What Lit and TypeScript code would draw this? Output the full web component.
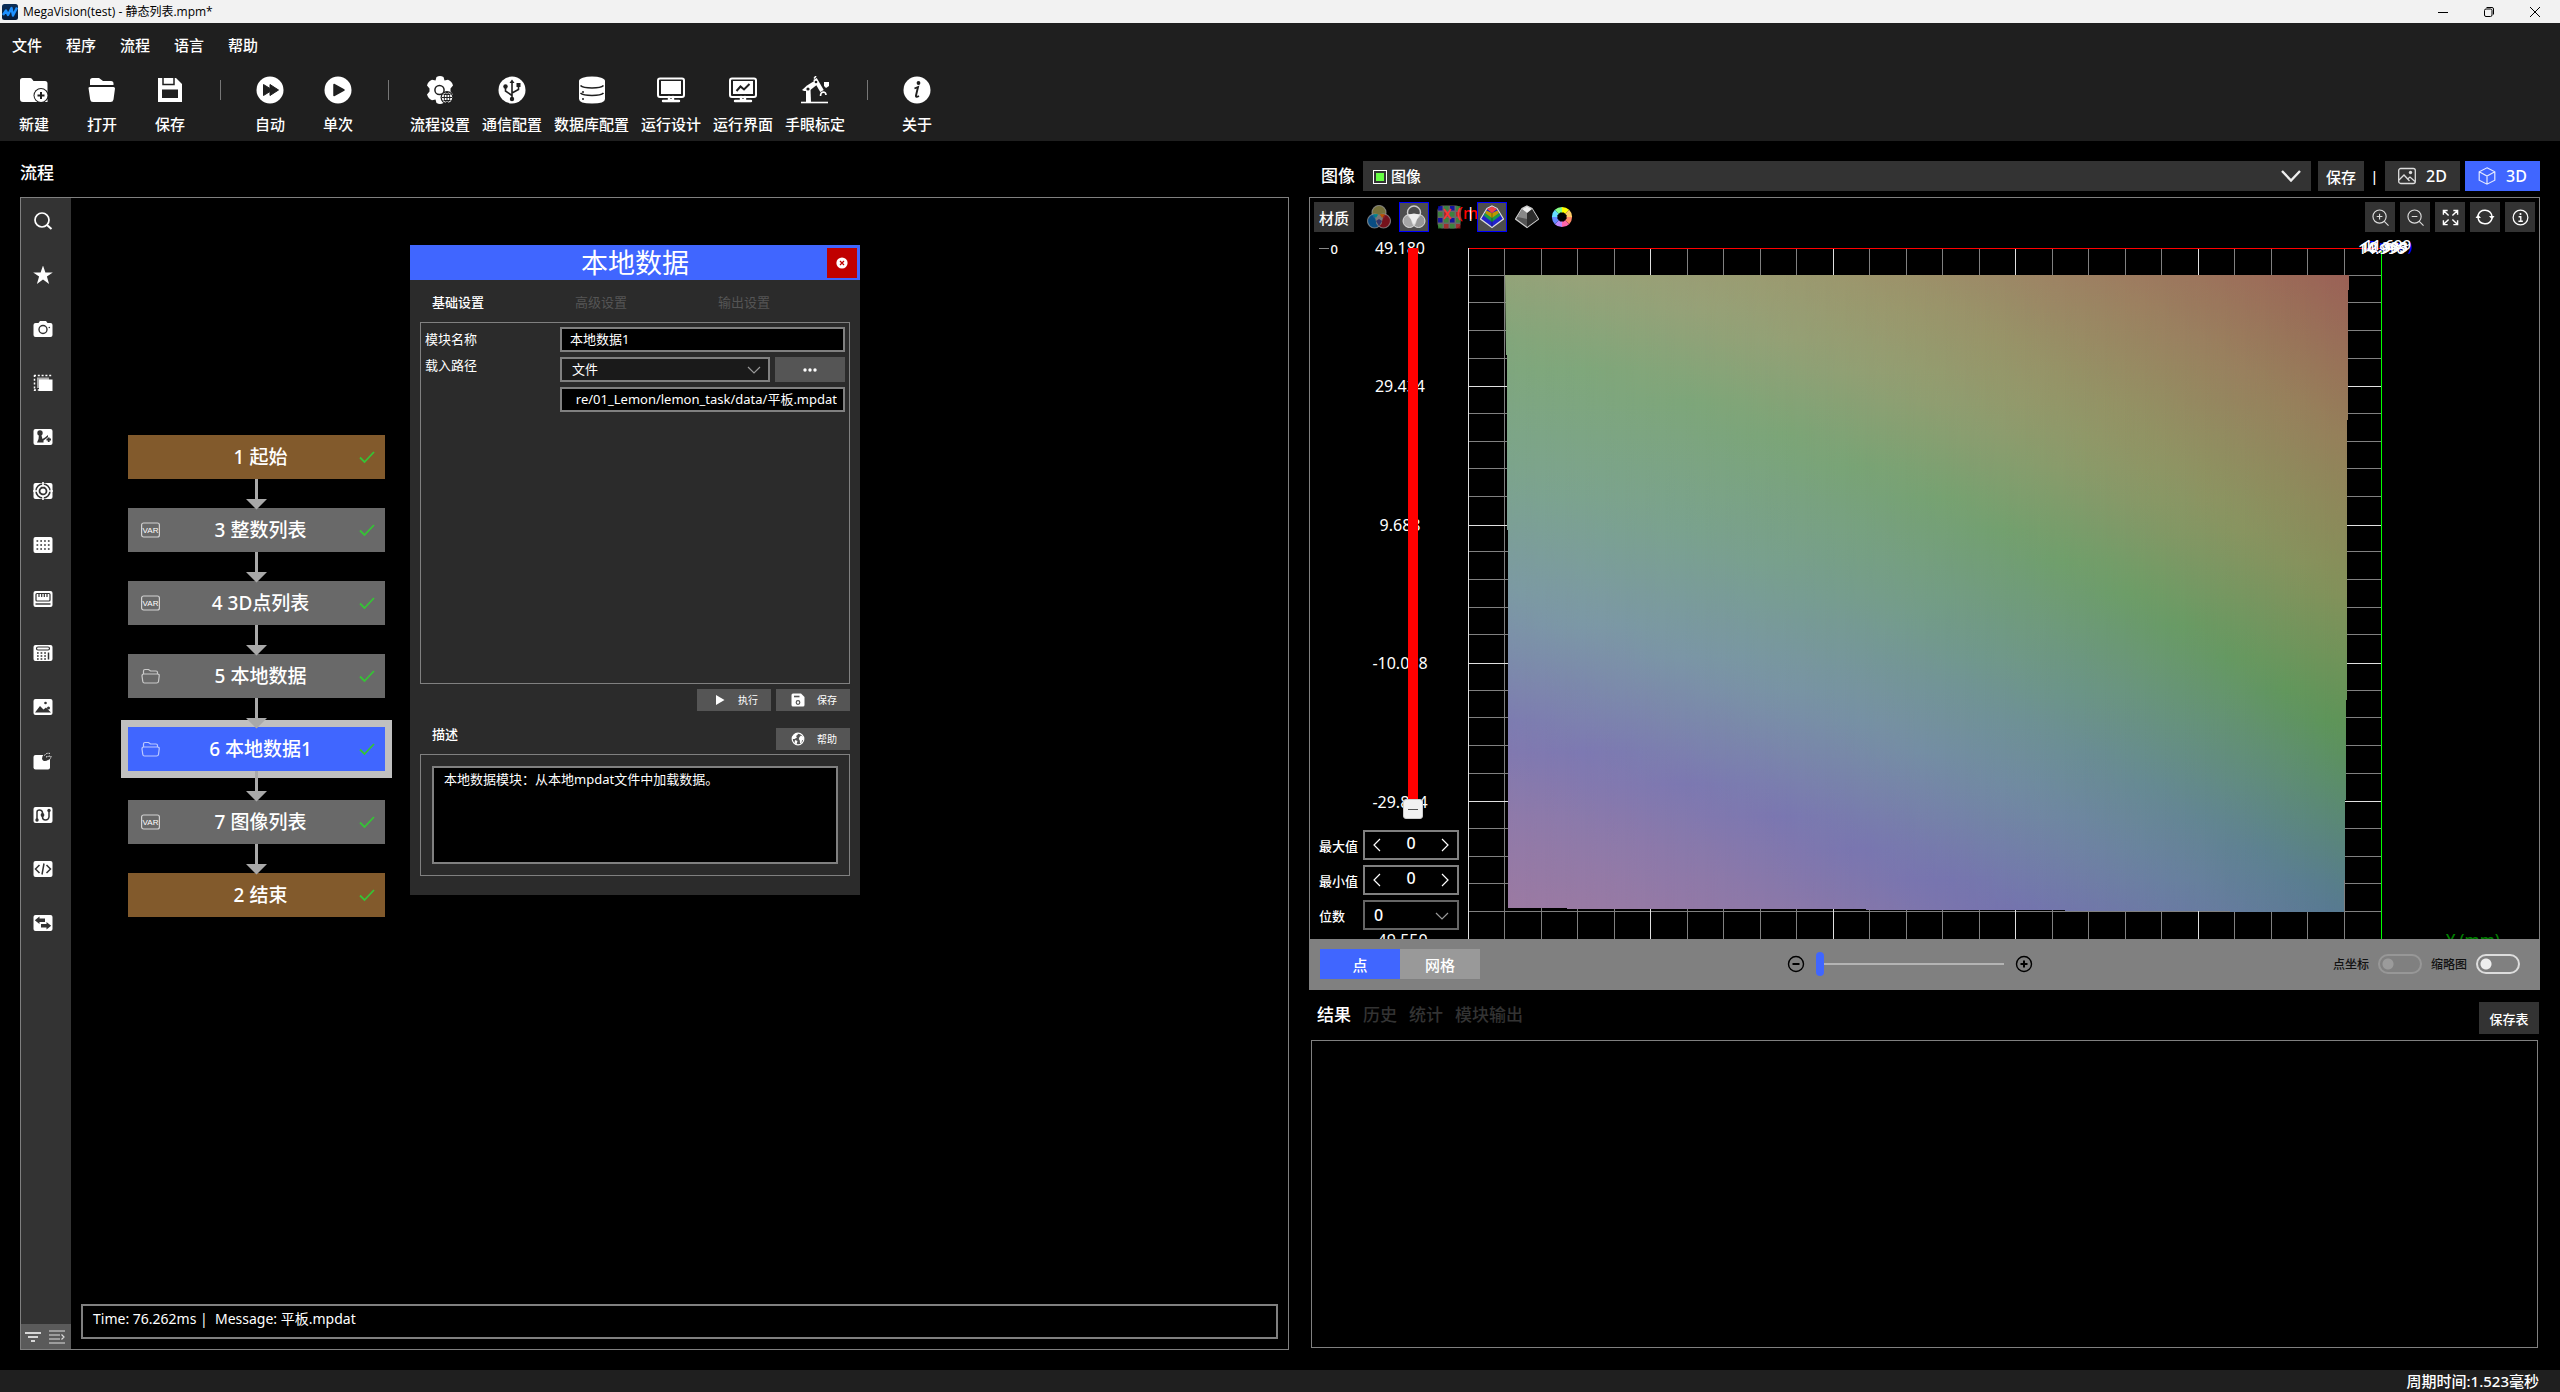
import { LitElement, html, svg, css, nothing } from "lit";
import { customElement, property, state } from "lit/decorators.js";
import { classMap } from "lit/directives/class-map.js";

const base = css`
  :host {
    display: block;
    font-family: "Noto Sans", "Noto Sans CJK SC", sans-serif;
    font-weight: 500;
    color: #fff;
    --bar: #1f1f1f;
    --panel: #333;
    --line: #808080;
    --accent: #4066ff;
  }
  *, *::before, *::after { box-sizing: border-box; }
  button, input, select, textarea {
    font: inherit;
    color: inherit;
    margin: 0;
    padding: 0;
    border: 0;
    border-radius: 0;
    background: none;
    outline: none;
  }
  button { display: flex; align-items: center; justify-content: center; cursor: pointer; }
  select { appearance: none; }
  svg { display: block; flex: none; }
`;

const icon = (box: number, size: number, body: unknown) =>
  html`<svg width=${size} height=${size} viewBox="0 0 ${box} ${box}" fill="none" aria-hidden="true">${body}</svg>`;

const wide = (w: number, h: number, body: unknown) =>
  html`<svg width=${w} height=${h} viewBox="0 0 ${w} ${h}" fill="none" aria-hidden="true">${body}</svg>`;

/* ---------- main toolbar glyphs, 28 x 28 ---------- */
const D = "#1f1f1f";
const tools = {
  create: svg`<path d="M0 4.500Q0 2 2.500 2H10q1.500 0 2 1l1.500 2H25q2.500 0 2.500 2.500V26H3Q0 26 0 23Z" fill="#fff"/>
    <circle cx="21" cy="19.500" r="7.500" fill="${D}"/><circle cx="21" cy="19.500" r="6.500" fill="#fff"/>
    <path d="M21 16v7M17.500 19.500h7" stroke="${D}" stroke-width="2"/>`,
  open: svg`<path d="M2 9V4.500Q2 2 4.500 2H11l4 3h8q2.500 0 2.500 2.500V9Z" fill="#fff"/>
    <path d="M.5 12Q.5 11 2 11H25.500Q27 11 27 12.500L25.500 23.500Q25 26 22.500 26H5Q2.500 26 2.200 23.500Z" fill="#fff"/>`,
  save: svg`<path d="M2 2H20L26 8V26H2Z" fill="#fff"/><path d="M7 2V8.500H18V2" stroke="${D}" stroke-width="1.500"/>
    <rect x="6" y="13.500" width="16" height="8.500" fill="${D}"/>`,
  auto: svg`<circle cx="14" cy="14" r="13.500" fill="#fff"/>
    <path d="M7.500 8.500 14 12.500V8.500L22.500 14 14 19.500V15.500L7.500 19.500Z" fill="${D}" stroke="${D}" stroke-linejoin="round"/>`,
  once: svg`<circle cx="14" cy="14" r="13.500" fill="#fff"/><path d="M10 8.500V19.500L20 14Z" fill="${D}" stroke="${D}" stroke-width="1.500" stroke-linejoin="round"/>`,
  flow: svg`<path d="M10.500 1Q14-1 17.500 1L18.500 4.500 22 3.800Q26 5.500 27 9.500L24.500 12.500V15.500L27 18.500Q26 22.500 22 24.200L18.500 23.500 17.500 27Q14 29 10.500 27L9.500 23.500 6 24.200Q2 22.500 1 18.500L3.500 15.500V12.500L1 9.500Q2 5.500 6 3.800L9.500 4.500Z" fill="#fff"/>
    <circle cx="13.500" cy="14" r="4.600" stroke="${D}" stroke-width="1.500"/><circle cx="21" cy="21.500" r="6.500" fill="${D}"/>
    <circle cx="21" cy="21.500" r="5.200" fill="#fff"/><path d="M16 21.500h10M21 16.500v10M17.500 18.500h7M17.500 24.500h7" stroke="${D}"/><ellipse cx="21" cy="21.500" rx="2.800" ry="5.200" stroke="${D}"/>`,
  comm: svg`<circle cx="14" cy="14" r="13.500" fill="#fff"/>
    <path d="M14 5V22M14 19.500 7.500 15V10.500M14 17 20.500 13.500V9.500" stroke="${D}" stroke-width="1.600"/>
    <path d="M11.500 7 14 3.500 16.500 7Z" fill="${D}"/><circle cx="7.500" cy="10.500" r="2.200" fill="${D}"/><rect x="18.500" y="7" width="4" height="4" fill="${D}"/><circle cx="14" cy="23" r="2.200" fill="${D}"/>`,
  db: svg`<ellipse cx="14" cy="5" rx="13" ry="4.500" fill="#fff"/><path d="M1 5H27V23Q27 27.500 14 27.500T1 23Z" fill="#fff"/>
    <path d="M2.500 9.500Q5 12 14 12T25.500 9.500M2.500 17Q5 19.500 14 19.500T25.500 17" stroke="${D}" stroke-width="1.600"/><circle cx="5" cy="16" r="1" fill="${D}"/><circle cx="5" cy="23" r="1" fill="${D}"/>`,
  design: svg`<rect x="1" y="2.500" width="26" height="18.500" rx="2" stroke="#fff" stroke-width="2"/><rect x="4" y="5" width="20" height="13" fill="#fff"/>
    <path d="M12 21V24H16V21M6 25H22" stroke="#fff" stroke-width="2.400" stroke-linecap="round"/>`,
  screen: svg`<rect x="1" y="2.500" width="26" height="18.500" rx="2" stroke="#fff" stroke-width="2"/><rect x="4" y="5" width="20" height="13" fill="#fff"/>
    <path d="M7.500 15 11.500 10.500 15 13.500 20.500 8" stroke="${D}" stroke-width="2"/><path d="M12 21V24H16V21M6 25H22" stroke="#fff" stroke-width="2.400" stroke-linecap="round"/>`,
  arm: svg`<path d="M0 26.500H27" stroke="#fff" stroke-width="1.600"/><path d="M5 26V13H9.500L10 26Z" fill="#fff"/>
    <path d="M1 14 6 9.500 14 4.500 17 8 8 15 3 15Z" fill="#fff"/><path d="M14 3 21 15" stroke="#fff" stroke-width="4"/>
    <circle cx="7" cy="13" r="1.600" fill="${D}"/><circle cx="15" cy="6" r="1.300" fill="${D}"/><path d="M13 2.500 15 0" stroke="#fff" stroke-width="1.500"/>
    <path d="M23 6H28V10L25 12 23 10Z" fill="#fff"/><path d="M22 16Q19.500 16.500 19.500 20M22 16Q25 16 25 19" stroke="#fff" stroke-width="1.600"/>`,
  about: svg`<circle cx="14" cy="14" r="13.500" fill="#fff"/><circle cx="15.500" cy="7" r="1.900" fill="${D}"/>
    <path d="M11.500 12.500 15 11 13 19.500Q12.600 21.800 16 20" stroke="${D}" stroke-width="1.900"/>`,
};

/* ---------- sidebar glyphs, 20 x 18 ---------- */
const S = "#333333";
const card = svg`<rect x=".5" y="1" width="19" height="16" rx="2" fill="#fff"/>`;
const sideIcons: [string, unknown][] = [
  ["搜索", svg`<circle cx="9" cy="8" r="7" stroke="#fff" stroke-width="1.700"/><path d="M14 13 18.500 17" stroke="#fff" stroke-width="2"/>`],
  ["收藏", svg`<path d="M10-.5 12.400 6.400H19.800L13.900 10.600 16.100 18 10 13.600 3.900 18 6.100 10.600.200 6.400H7.600Z" fill="#fff"/>`],
  ["相机", svg`<path d="M2.500 3H5.500L7 1H13L14.500 3H17.500Q19.500 3 19.500 5V15Q19.500 17 17.500 17H2.500Q.5 17 .5 15V5Q.5 3 2.500 3Z" fill="#fff"/><circle cx="10" cy="9.500" r="4" stroke="${S}" stroke-width="1.400"/><circle cx="16.300" cy="7.500" r=".8" fill="${S}"/>`],
  ["区域", svg`<path d="M1 1.500H19M1.500 1V17M1 16H6" stroke="#fff" stroke-width="1.500" stroke-dasharray="2 1.800"/><path d="M4 3.500H16V6H6V14H4Z" fill="#aaa"/><rect x="6" y="5.500" width="13.500" height="11.500" fill="#fff"/>`],
  ["定位", svg`${card}<circle cx="7" cy="5" r="2.700" fill="${S}"/><path d="M6 6H8L9.500 11 12 9.500 15 7V9L10.500 12.500V14.500H4L5.500 11Z" fill="${S}"/><path d="M13.500 11.500H18M15.700 9.500V14" stroke="${S}" stroke-width="1.800"/>`],
  ["标靶", svg`${card}<circle cx="10" cy="9" r="7" stroke="${S}" stroke-width="1.600"/><circle cx="10" cy="9" r="3.500" stroke="${S}" stroke-width="1.800"/><path d="M10 0V4.500M10 13.500V18M0 9H5M15 9H20" stroke="#fff" stroke-width="1.600"/>`],
  ["点阵", svg`${card}<path d="M3.500 5H17M3.500 9H17M3.500 13H17" stroke="${S}" stroke-width="1.700" stroke-dasharray="1.700 2.100"/>`],
  ["测量", svg`${card}<rect x="3" y="3.500" width="14" height="7.500" rx="1" stroke="${S}" stroke-width="1.200"/><path d="M6 4V7M8.700 4V7M11.300 4V7M14 4V7" stroke="${S}" stroke-width="1.200"/><path d="M2.500 14H17.500" stroke="${S}" stroke-width="1.400"/>`],
  ["计算", svg`${card}<rect x="3.500" y="3" width="13" height="3" rx="1.500" stroke="${S}" stroke-width="1.200"/><path d="M4 9H14M4 12H14M4 15H14" stroke="${S}" stroke-width="1.500" stroke-dasharray="1.700 1.900"/><path d="M15.500 8.500V15.500" stroke="${S}" stroke-width="1.500"/>`],
  ["图像", svg`${card}<path d="M2 14.500 7 8 10.500 11.500 13 9.500 18 14.500Z" fill="${S}"/><circle cx="12.500" cy="5" r="1.300" fill="${S}"/><circle cx="15.500" cy="10" r="1.500" fill="${S}"/>`],
  ["旋转", svg`<rect x=".5" y="3" width="16.500" height="14.500" rx="2" fill="#fff"/><path d="M9 7Q9 1 15 1L18.500 2.500 17.500 7Q13 10 10 8.500Z" fill="${S}"/><path d="M11.500 3.500Q13 .5 17 1.500M18 4Q18 8 13.500 9M13 5L17 4" stroke="#fff" stroke-width="1" stroke-dasharray="1.500 1"/>`],
  ["路径", svg`${card}<path d="M4 14.500V6Q4 4 6.500 4T9.500 6.500V11Q9.500 14 12.500 14T16 11V4" stroke="${S}" stroke-width="1.500"/><circle cx="4" cy="14" r="1.700" fill="${S}"/><circle cx="9.500" cy="9" r="1.900" fill="${S}"/><circle cx="16" cy="4.500" r="1.700" fill="${S}"/>`],
  ["脚本", svg`${card}<path d="M6.500 5 2.500 9 6.500 13M13.500 5 17.500 9 13.500 13M11 3.500 9 14.500" stroke="${S}" stroke-width="1.500"/>`],
  ["转换", svg`${card}<path d="M12 6.200H5M8 11.800H15" stroke="${S}" stroke-width="3.600"/><path d="M6.500 2.500V10L1.800 6.200ZM13.500 8V15.500L18.200 11.800Z" fill="${S}"/>`],
];

const folderIcon = svg`<path d="M2.500 6V3Q2.500 1.500 4 1.500H7.500L9.500 3H15Q16.500 3 16.500 4.500V6M1 8Q1 6 3 6H16.500Q18.500 6 18.200 8L17.500 13.500Q17.300 15 15.500 15H3.500Q2 15 1.800 13.500Z" stroke="#fff" stroke-opacity=".65" stroke-width="1.200"/>`;
const varIcon = svg`<rect x=".6" y="1" width="17.800" height="14" rx="2" stroke="#fff" stroke-opacity=".7" stroke-width="1.200"/><text x="9.500" y="11" font-size="8" text-anchor="middle" fill="#fff" font-family="Liberation Sans, sans-serif">VAR</text>`;

const diskPath = svg`<path d="M.5 2Q.5.5 2 .5H10L13.500 4V12Q13.500 13.500 12 13.500H2Q.5 13.500.5 12Z" fill="#fff"/><path d="M3 3.500H8.500" stroke="#555" stroke-width="1.600"/><circle cx="7" cy="9.500" r="1.800" stroke="#555" stroke-width="1.200"/>`;

interface FlowStep { label: string; kind: "end" | "var" | "file"; selected?: boolean }

/* ---------- module settings window ---------- */
@customElement("module-dialog")
export class ModuleDialog extends LitElement {
  @state() private tab = 0;
  static styles = [base, css`
    :host { width: 450px; background: #2b2b2b; font-size: 13px; font-weight: 400; line-height: 20px; padding-bottom: 19px; }
    .head { display: grid; grid-template-columns: 33px 1fr 33px; align-items: center; height: 35px; background: var(--accent); }
    .title { grid-column: 2; margin: 0; text-align: center; font-size: 27px; font-weight: 400; line-height: 32px; }
    .close { width: 30px; height: 30px; background: #c00000; }
    .tabs { display: flex; gap: 91px; padding: 12px 22px 10px; }
    .tab { color: #555; }
    .tab.on { color: #fff; font-weight: 500; }
    .box { margin: 0 10px; border: 1px solid var(--line); }
    .form { height: 362px; padding: 4px; display: grid; grid-template-columns: 135px 1fr; align-items: start; }
    .names { display: flex; flex-direction: column; gap: 6px; padding-top: 2px; }
    .fields { display: flex; flex-direction: column; gap: 5px; }
    .row { display: flex; gap: 5px; }
    .in { width: 100%; height: 25px; border: 2px solid var(--line); background: #000; padding: 0 8px 2px; }
    .path { padding: 0 6px 2px; text-align: right; }
    .pick { position: relative; flex: 1; }
    .pick .in { background: #1a1a1a; padding: 0 10px 2px; display: block; }
    .pick svg { position: absolute; right: 9px; top: 9px; pointer-events: none; }
    .more, .act { background: #555; }
    .more { width: 70px; height: 25px; }
    .actions { display: flex; justify-content: flex-end; gap: 5px; padding: 5px 10px 17px; }
    .act { width: 74px; height: 22px; gap: 12px; padding-left: 2px; font-size: 10px; line-height: 20px; }
    .sub { display: flex; justify-content: space-between; align-items: flex-start; padding: 0 10px 4px 22px; }
    .sub label { font-size: 13px; font-weight: 500; line-height: 12px; }
    .desc { padding: 11px; }
    .desc textarea { display: block; width: 100%; height: 98px; border: 2px solid var(--line); background: #000; padding: 1px 10px; resize: none; overflow: hidden; }
  `];
  render() {
    return html`
      <header class="head">
        <h2 class="title">本地数据</h2>
        <button class="close" aria-label="关闭">${icon(12, 12, svg`<circle cx="6" cy="6" r="5.600" fill="#fff"/><path d="M4 4 8 8M8 4 4 8" stroke="#c00000" stroke-width="1.200"/>`)}</button>
      </header>
      <nav class="tabs">
        ${["基础设置", "高级设置", "输出设置"].map((t, i) => html`<button class="tab ${classMap({ on: this.tab === i })}" @click=${() => (this.tab = i)}>${t}</button>`)}
      </nav>
      <section class="box form">
        <div class="names"><label for="name">模块名称</label><label for="source">载入路径</label></div>
        <div class="fields">
          <input id="name" class="in" value="本地数据1" />
          <div class="row">
            <div class="pick">
              <select id="source" class="in"><option>文件</option></select>
              ${wide(14, 8, svg`<path d="M1 1 7 7 13 1" stroke="#999" stroke-width="1.200"/>`)}
            </div>
            <button class="more" aria-label="浏览">${wide(16, 4, svg`<circle cx="3" cy="2" r="1.700" fill="#fff"/><circle cx="8" cy="2" r="1.700" fill="#fff"/><circle cx="13" cy="2" r="1.700" fill="#fff"/>`)}</button>
          </div>
          <input class="in path" aria-label="文件路径" value="re/01_Lemon/lemon_task/data/平板.mpdat" />
        </div>
      </section>
      <div class="actions">
        <button class="act">${icon(14, 14, svg`<path d="M4 2V12L12.500 7Z" fill="#fff"/>`)}执行</button>
        <button class="act">${icon(14, 14, diskPath)}保存</button>
      </div>
      <div class="sub">
        <label for="desc">描述</label>
        <button class="act">${icon(14, 14, svg`<circle cx="7" cy="7" r="5.800" stroke="#fff" stroke-width="1.200"/><path d="M1.200 5 4 2 6.500 1.200 6.800 2.800 5 4 6 5.500 3.500 7 1.200 7ZM4 8 6.500 9 5.500 12.800 3.500 11ZM8.500 5 10 3.500 12.500 5 12.800 7.500 11 8.500 10.500 11 9 11.500 8.800 8.500 7.800 7Z" fill="#fff"/>`)}帮助</button>
      </div>
      <section class="box desc"><textarea id="desc">本地数据模块：从本地mpdat文件中加载数据。</textarea></section>
    `;
  }
}

/* ---------- flow editor ---------- */
@customElement("flow-panel")
export class FlowPanel extends LitElement {
  @property({ attribute: false }) steps: FlowStep[] = [
    { label: "1 起始", kind: "end" },
    { label: "3 整数列表", kind: "var" },
    { label: "4 3D点列表", kind: "var" },
    { label: "5 本地数据", kind: "file" },
    { label: "6 本地数据1", kind: "file", selected: true },
    { label: "7 图像列表", kind: "var" },
    { label: "2 结束", kind: "end" },
  ];
  static styles = [base, css`
    :host { display: flex; flex-direction: column; }
    .heading { margin: 0; padding: 20px 0 12px; font-size: 17px; font-weight: 500; line-height: 24px; }
    .frame { flex: 1; display: flex; border: 1px solid var(--line); }
    .side { width: 50px; display: flex; flex-direction: column; background: var(--panel); }
    .list { flex: 1; display: flex; flex-direction: column; gap: 10px; padding-top: 1px; }
    .list button { height: 44px; padding-right: 6px; }
    .foot { display: flex; justify-content: space-around; height: 25px; padding-right: 2px; background: #5a5a5a; }
    .canvas { position: relative; flex: 1; min-width: 0; display: flex; flex-direction: column; }
    .steps { flex: 1; display: flex; flex-direction: column; align-items: flex-start; padding: 237px 57px 20px; }
    .node { width: 257px; height: 44px; display: grid; grid-template-columns: 44px 1fr 36px; align-items: center; background: #696969; font-size: 19px; line-height: 28px; }
    .node.end { background: #825a2c; }
    .node.selected { background: var(--accent); box-shadow: 0 0 0 7px #c0c0c0; }
    .node .lead { padding-left: 13px; }
    .node .name { text-align: center; }
    .node .done { justify-self: end; padding-right: 8px; }
    .link { width: 257px; height: 29px; display: flex; justify-content: center; z-index: 1; }
    .link svg { overflow: visible; }
    .log { margin: 0 10px 10px; height: 35px; border: 2px solid var(--line); padding: 3px 10px; font-size: 14px; font-weight: 400; line-height: 20px; white-space: pre; }
    module-dialog { position: absolute; left: 339px; top: 47px; }
  `];
  render() {
    return html`
      <h1 class="heading">流程</h1>
      <div class="frame">
        <aside class="side">
          <div class="list">${sideIcons.map(([name, g]) => html`<button aria-label=${name}>${wide(20, 18, g)}</button>`)}</div>
          <div class="foot">
            <button aria-label="筛选">${wide(16, 12, svg`<path d="M0 2H16M3 6H13M6 10H10" stroke="#fff" stroke-width="1.600"/>`)}</button>
            <button aria-label="展开">${wide(16, 14, svg`<path d="M0 1H16M0 5H11M0 9H11M0 13H16M12.500 4.500 15 7 12.500 9.500" stroke="#ddd" stroke-width="1.200"/>`)}</button>
          </div>
        </aside>
        <div class="canvas">
          <div class="steps">
            ${this.steps.map((s, i) => html`
              ${i ? html`<div class="link">${wide(21, 31, svg`<path d="M9 0H12V20H21L10.500 30.500 0 20H9Z" fill="#a9a9a9"/>`)}</div>` : nothing}
              <div class="node ${classMap({ end: s.kind === "end", selected: !!s.selected })}">
                <span class="lead">${s.kind === "end" ? nothing : wide(19, 16, s.kind === "var" ? varIcon : folderIcon)}</span>
                <span class="name">${s.label}</span>
                <span class="done">${wide(20, 14, svg`<path d="M3 7.500 7.500 12 17 2" stroke="#35c435" stroke-width="1.800"/>`)}</span>
              </div>`)}
          </div>
          <div class="log">Time: 76.262ms |  Message: 平板.mpdat</div>
          <module-dialog></module-dialog>
        </div>
      </div>
    `;
  }
}

/* ---------- point cloud colouring ---------- */
type Stop = [number, number[]];
const rgb = (h: string) => [1, 3, 5].map((i) => parseInt(h.slice(i, i + 2), 16));
const farRamp: Stop[] = ([[-0.6, "#a86a5c"], [-0.34, "#a4826a"], [-0.18, "#a09870"], [-0.03, "#98a279"], [0.12, "#7fa77b"], [0.33, "#7ca38f"], [0.52, "#7c98a6"], [0.72, "#7d79b2"], [0.85, "#8f7aa9"], [1, "#9c7aa2"]] as [number, string][]).map(([s, c]) => [s, rgb(c)]);
const nearRamp: Stop[] = ([[-0.6, "#9b6056"], [-0.34, "#95805a"], [-0.1, "#84915a"], [0.12, "#5c9457"], [0.24, "#5a8a70"], [0.4, "#567a90"], [0.68, "#6668a8"]] as [number, string][]).map(([s, c]) => [s, rgb(c)]);
const sample = (ramp: Stop[], s: number): number[] => {
  if (s <= ramp[0][0]) return ramp[0][1];
  for (let i = 1; i < ramp.length; i++) {
    if (s <= ramp[i][0]) {
      const k = (s - ramp[i - 1][0]) / (ramp[i][0] - ramp[i - 1][0]);
      return ramp[i][1].map((c, j) => ramp[i - 1][1][j] * (1 - k) + c * k);
    }
  }
  return ramp[ramp.length - 1][1];
};
const cloudColor = (u: number, v: number) => {
  const s = v - 0.3 * u - 0.3 * u * u;
  const a = sample(farRamp, s);
  const b = sample(nearRamp, s);
  const w = u * u;
  return `rgb(${a.map((c, i) => Math.round(c * (1 - w) + b[i] * w)).join(",")})`;
};
const range = (n: number) => Array.from({ length: n }, (_, i) => i);
const COLS = 44;
const ROWS = 20;
const CLOUD_X = 1505;
const STEP = 20;

/* ---------- 3D viewer ---------- */
@customElement("image-viewer")
export class ImageViewer extends LitElement {
  static styles = [base, css`
    :host { display: flex; flex-direction: column; min-height: 0; border: 1px solid var(--line); }
    .stage { position: relative; flex: 1; display: flex; flex-direction: column; min-height: 0; overflow: hidden; }
    .scene { position: absolute; left: 0; top: 0; width: 100%; height: 100%; }
    .over { position: relative; flex: 1; min-height: 0; display: flex; flex-direction: column; padding: 4px 4px 9px; }
    .tools { display: flex; justify-content: space-between; }
    .left, .right { display: flex; gap: 5px; }
    .mat { width: 40px; height: 30px; margin-right: 5px; background: var(--panel); font-size: 15px; }
    .ic { width: 30px; height: 30px; border: 1px solid transparent; }
    .ic.on { background: #4d4d4d; border-color: #0000ff; }
    .right .ic { background: var(--panel); }
    .bar { width: 3px; font-size: 15px; line-height: 20px; display: flex; justify-content: center; }
    .levels { width: 145px; flex: 1; min-height: 0; display: flex; flex-direction: column; padding-top: 16px; }
    .gauge { flex: 1; min-height: 0; display: flex; gap: 65px; padding-left: 5px; font-size: 13px; line-height: 18px; }
    .zero { display: flex; align-items: center; gap: 2px; height: 1px; width: 19px; }
    .zero i { width: 10px; height: 1px; background: #888; }
    .vert { appearance: none; writing-mode: vertical-lr; direction: rtl; width: 20px; height: auto; min-height: 0; background: linear-gradient(#f00, #f00) center / 10px 100% no-repeat; }
    .vert::-webkit-slider-thumb { appearance: none; width: 20px; height: 20px; border: 1px solid #ccc; border-radius: 3px; background: linear-gradient(#555, #555) center / 10px 1px no-repeat, #f2f2f2; }
    .field { display: grid; grid-template-columns: 44px 96px; align-items: center; padding-left: 5px; margin-top: 5px; font-size: 13px; }
    .field.first { margin-top: 11px; }
    .spin { height: 30px; display: flex; border: 2px solid var(--line); background: #000; font-size: 16px; }
    .spin button { width: 24px; }
    .spin input { flex: 1; min-width: 0; padding-bottom: 4px; text-align: center; }
    .pick { position: relative; }
    .pick select { display: block; width: 100%; height: 30px; border: 2px solid #666; padding: 0 9px; background: #000; font-size: 16px; }
    .pick svg { position: absolute; right: 10px; top: 12px; pointer-events: none; }
    .dock { display: flex; align-items: center; height: 50px; background: #808080; padding: 0 19px 0 10px; }
    .seg { width: 80px; height: 30px; background: #999; font-size: 15px; }
    .seg.on { background: var(--accent); }
    .zoom { flex: 1; display: flex; align-items: center; justify-content: center; gap: 11px; padding-left: 17px; }
    .size { appearance: none; width: 188px; height: 24px; background: linear-gradient(#b4b4b4, #b4b4b4) center / 100% 2px no-repeat; }
    .size::-webkit-slider-thumb { appearance: none; width: 8px; height: 24px; border-radius: 4px; background: var(--accent); }
    .sw { display: flex; align-items: center; gap: 9px; margin-left: 9px; font-size: 12px; color: #111; }
    .sw input { appearance: none; width: 44px; height: 20px; border: 2px solid #ddd; border-radius: 10px; background: radial-gradient(circle at 8px 8px, #eee 5px, transparent 6px); }
    .sw input:disabled { opacity: .25; }
  `];
  private scene() {
    return html`<svg class="scene" fill="none">
      <defs>
        ${range(COLS).map((i) => svg`<linearGradient id="c${i}" x1="0" y1="0" x2="0" y2="1">${range(ROWS + 1).map((r) => svg`<stop offset=${r / ROWS} stop-color=${cloudColor((i * STEP) / 844, r / ROWS)} />`)}</linearGradient>`)}
        <linearGradient id="fade"><stop offset="0" stop-color="#000"/><stop offset="1" stop-color="#fff"/></linearGradient>
        <mask id="ramp" x="0" y="0" width="1" height="1" maskContentUnits="objectBoundingBox"><rect width=".5" height="1" fill="url(#fade)"/><rect x=".5" width=".5" height="1" fill="#fff"/></mask>
        <clipPath id="shape"><path d="M1505 275H2349V290H2348V420H2347V700H2346V800H2345V912H2230V911H2065V910H1866V909H1567V908H1508V530H1507V355H1506Z"/></clipPath>
      </defs>
      <g transform="translate(-1310 -198)">
      ${range(26).filter((k) => k % 5).map((k) => svg`<path d="M${Math.round(1469 + 36.48 * k) - 0.5} 249V939" stroke="#808080"/>`)}
      ${range(25).filter((k) => k % 5).map((k) => svg`<path d="M1469 ${Math.round(248 + 27.67 * k) - 0.5}H2381" stroke="#808080"/>`)}
      ${range(5).map((k) => svg`<path d="M${Math.round(1469 + 36.48 * 5 * k) - 0.5} 248V939" stroke="#e0e0e0"/>`)}
      ${range(5).map((k) => svg`<path d="M1469 ${Math.round(248 + 27.67 * 5 * k) + 0.5}H2381" stroke="#e0e0e0"/>`)}
      <g clip-path="url(#shape)">
        ${range(COLS).map((i) => svg`<rect x=${CLOUD_X + STEP * (i - 1)} y="275" width=${STEP * 2} height="637" fill="url(#c${i})" mask=${i ? "url(#ramp)" : "none"} />`)}
      </g>
      <path d="M2344.500 880V939" stroke="#808080"/>
      <path d="M1469 248.500H2381" stroke="#f00"/>
      <path d="M2381.500 248V939" stroke="#0f0"/>
      <g font-size="16" font-weight="400" fill="#fff" text-anchor="middle" dominant-baseline="central">
        ${["49.180", "29.434", "9.688", "-10.058", "-29.804", "-49.550"].map((t, i) => svg`<text x="1400" y=${Math.round(248 + 138.4 * i)}>${t}</text>`)}
      </g>
      <g font-size="15">
        <text x="2366" y="251" fill="#00f">Z(mm)</text>
        <g fill="#fff"><text x="2358" y="254">14.996</text><text x="2361" y="252">12.333</text><text x="2364" y="250">11.699</text><text x="2360" y="253">10.999</text></g>
      </g>
      <text x="2446" y="946" font-size="16" fill="#008000">Y (mm)</text>
      <text x="1444" y="219" font-size="16" fill="#f00">X (m</text>
      </g>
    </svg>`;
  }
  private spinner(id: string, label: string, first = false) {
    return html`<div class="field ${classMap({ first })}">
      <label for=${id}>${label}</label>
      <div class="spin">
        <button aria-label="减少">${wide(8, 14, svg`<path d="M7 1 1 7 7 13" stroke="#fff" stroke-width="1.200"/>`)}</button>
        <input id=${id} value="0" />
        <button aria-label="增加">${wide(8, 14, svg`<path d="M1 1 7 7 1 13" stroke="#fff" stroke-width="1.200"/>`)}</button>
      </div>
    </div>`;
  }
  render() {
    const circles = (a: string, b: string, c: string, o: number) => svg`<g fill-opacity=${o} stroke="#999" stroke-opacity=".7" stroke-width="1.200"><circle cx="12" cy="7.500" r="7" fill=${a}/><circle cx="7.500" cy="16" r="7" fill=${b}/><circle cx="16.500" cy="16" r="7" fill=${c}/></g>`;
    const glass = (plus: boolean) => svg`<circle cx="8" cy="8" r="7" stroke="#ddd" stroke-width="1.200"/><path d="M13 13 17.500 17.500M5 8H11${plus ? "M8 5V11" : ""}" stroke="#ddd" stroke-width="1.200"/>`;
    return html`
      <div class="stage">
        ${this.scene()}
        <div class="over">
          <div class="tools">
            <div class="left">
              <button class="mat">材质</button>
              <button class="ic" aria-label="彩色">${icon(24, 24, svg`${circles("#8a8444", "#0a5a9a", "#8a1420", 0.85)}<path d="M12 9.500 16 12.500 14.500 19 12 21 9.500 19 8 12.500Z" fill="#777"/><path d="M6 9.500 11 9 9 13Z" fill="#088"/><path d="M13 9 18 9.500 15 13Z" fill="#b50"/><path d="M12 14 15 16 12 21 9 16Z" fill="#336"/>`)}</button>
              <button class="ic on" aria-label="灰度">${icon(24, 24, svg`<circle cx="12" cy="7.500" r="6.500" stroke="#ccc" stroke-width="1.400"/><circle cx="7.500" cy="16" r="6.500" fill="#ccc" fill-opacity=".7" stroke="#ddd"/><circle cx="16.500" cy="16" r="6.500" fill="#ccc" fill-opacity=".6" stroke="#ddd"/><path d="M6.500 10Q12 7 17.500 10L12 20Z" fill="#eee"/>`)}</button>
              <button class="ic" aria-label="网格纹理">${icon(24, 24, svg`<rect x=".5" y=".5" width="23" height="23" rx="5" fill="#686868"/>
                ${[["1", "1", "#00a"], ["7", "1", "#383"], ["13", "1", "#00a"], ["19", "1", "#383"], ["1", "7", "#383"], ["7", "7", "#a22"], ["13", "7", "#383"], ["19", "7", "#a22"], ["1", "13", "#00a"], ["7", "13", "#383"], ["13", "13", "#00a"], ["19", "13", "#383"], ["1", "19", "#383"], ["7", "19", "#a22"], ["13", "19", "#383"], ["19", "19", "#a22"]].map(([x, y, c]) => svg`<rect x=${x} y=${y} width="4.500" height="4.500" fill=${c} fill-opacity=".8"/>`)}
                <path d="M7 4 14 14M14 4 7 14M23 3Q19.500 9 23 15" stroke="#f33" stroke-width="1.600"/>`)}</button>
              <span class="bar">|</span>
              <button class="ic on" aria-label="高度着色">${icon(24, 24, svg`<path d="M12 1 17 3.500 23.500 14 12 22.500.5 14 7 3.500Z" fill="#22c" stroke="#ddd" stroke-width="1.200"/><path d="M3.500 10.500 12 17 20.500 10.500 19 8 12 12 5 8Z" fill="#1a9a4a"/><path d="M5 8 12 13 19 8 17.500 5.500 12 8 6.500 5.500Z" fill="#b90"/><path d="M12 1.500 17 4 12 8 7 4Z" fill="#e44"/><path d="M12 8V22" stroke="#000" stroke-opacity=".35"/>`)}</button>
              <button class="ic" aria-label="高度灰度">${icon(24, 24, svg`<path d="M12 1 17 3.500 23.500 14 12 22.500.5 14 7 3.500Z" fill="#555" stroke="#ccc" stroke-width="1.200"/><path d="M12 8 17 4 23 14 12 22Z" fill="#2c2c2c"/><path d="M7 4 12 8V14L2.500 12Z" fill="#888"/><path d="M12 1.500 17 4 12 8 7 4Z" fill="#eee"/>`)}</button>
              <button class="ic" aria-label="色盘">${icon(24, 22, svg`
                ${["#ff0", "#fc6", "#f86", "#f6a", "#b8f", "#68f", "#6df", "#8f8"].map((c, i) => svg`<path d="M12 1A11 11 0 0 1 19.800 4.200L12 12Z" fill=${c} transform="rotate(${i * 45} 12 12)"/>`)}
                <path d="M10 7H14L17 10V14L14 17H10L7 14V10Z" fill="#000"/>`)}</button>
            </div>
            <div class="right">
              <button class="ic" aria-label="放大">${icon(18, 17, glass(true))}</button>
              <button class="ic" aria-label="缩小">${icon(18, 17, glass(false))}</button>
              <button class="ic" aria-label="适应">${icon(18, 17, svg`<path d="M1.500 6V1.500H6M1.500 1.500 7 7M12 1.500H16.500V6M16.500 1.500 11 7M1.500 12V16.500H6M1.500 16.500 7 11M16.500 12V16.500H12M16.500 16.500 11 11" stroke="#fff" stroke-width="1.500"/>`)}</button>
              <button class="ic" aria-label="刷新">${wide(20, 18, svg`<path d="M3 7.500A7.200 7.200 0 0 1 17 8M17 10.500A7.200 7.200 0 0 1 3 10" stroke="#fff" stroke-width="1.400"/><path d="M14 8H19.500L17 11.500ZM.5 10H6L3 6.500Z" fill="#fff"/>`)}</button>
              <button class="ic" aria-label="信息">${icon(18, 17, svg`<circle cx="9" cy="9" r="7.800" stroke="#fff" stroke-width="1.300"/><circle cx="9" cy="5.300" r="1.100" fill="#fff"/><path d="M7 8.200H9.300V13M6.800 13H11.500" stroke="#fff" stroke-width="1.400"/>`)}</button>
            </div>
          </div>
          <div class="levels">
            <div class="gauge">
              <span class="zero"><i></i>0</span>
              <input class="vert" type="range" min="0" max="100" value="0" aria-label="高度" />
            </div>
            ${this.spinner("max", "最大值", true)}
            ${this.spinner("min", "最小值")}
            <div class="field">
              <label for="digits">位数</label>
              <div class="pick"><select id="digits"><option>0</option></select>${wide(14, 8, svg`<path d="M1 1 7 7 13 1" stroke="#999" stroke-width="1.200"/>`)}</div>
            </div>
          </div>
        </div>
      </div>
      <div class="dock">
        <button class="seg on">点</button><button class="seg">网格</button>
        <div class="zoom">
          ${icon(18, 18, svg`<circle cx="9" cy="9" r="7.500" stroke="#000" stroke-width="1.400"/><path d="M5.500 9H12.500" stroke="#000" stroke-width="2"/>`)}
          <input class="size" type="range" min="0" max="100" value="0" aria-label="点大小" />
          ${icon(18, 18, svg`<circle cx="9" cy="9" r="7.500" stroke="#000" stroke-width="1.400"/><path d="M5.500 9H12.500M9 5.500V12.500" stroke="#000" stroke-width="2"/>`)}
        </div>
        <label class="sw">点坐标<input type="checkbox" disabled /></label>
        <label class="sw">缩略图<input type="checkbox" /></label>
      </div>
    `;
  }
}

/* ---------- application shell ---------- */
@customElement("app-root")
export class AppRoot extends LitElement {
  @state() private resultTab = 0;
  static styles = [base, css`
    :host { min-height: 100vh; display: flex; flex-direction: column; background: #000; }
    .titlebar { display: flex; align-items: center; gap: 5px; height: 23px; padding-left: 2px; background: #f2f2f2; color: #000; font-family: "Open Sans", "Noto Sans CJK SC", sans-serif; font-size: 12px; font-weight: 400; line-height: 16px; }
    .caption { flex: 1; }
    .titlebar button { width: 46px; height: 23px; }
    .titlebar .wins { display: flex; gap: 0; padding-right: 2px; }
    .menu { display: flex; gap: 24px; height: 42px; padding: 1px 12px 0; background: var(--bar); }
    .menu button { font-size: 15px; line-height: 24px; }
    .toolbar { display: flex; height: 76px; background: var(--bar); }
    .tool { width: 68px; flex-direction: column; justify-content: flex-start; gap: 8px; padding-top: 11px; font-size: 15px; line-height: 24px; white-space: nowrap; }
    .tool.four { width: 72px; }
    .tool.five { width: 87px; }
    .sep { width: 32px; height: 20px; margin-top: 15px; display: flex; justify-content: center; }
    .sep::before { content: ""; width: 1px; background: #777; }
    .main { flex: 1; display: grid; grid-template-columns: minmax(0, 1269fr) minmax(0, 1231fr); column-gap: 20px; padding: 0 20px 20px; }
    .work { display: grid; grid-template-rows: 56px minmax(0, 793fr) 50px minmax(0, 308fr); padding-bottom: 2px; }
    .source { display: flex; align-items: center; padding-top: 14px; height: 50px; margin-top: 3px; font-size: 15px; }
    .source label { width: 54px; padding-left: 12px; font-size: 17px; line-height: 24px; }
    .combo { position: relative; flex: 1; height: 30px; }
    .combo select { width: 100%; height: 30px; padding: 0 28px; background: var(--panel); }
    .combo .mark { position: absolute; left: 10px; top: 9px; pointer-events: none; }
    .combo .chev { position: absolute; right: 10px; top: 9px; pointer-events: none; }
    .btn { height: 30px; background: var(--panel); }
    .save { width: 46px; margin-left: 7px; }
    .pipe { width: 21px; text-align: center; }
    .dim { width: 75px; gap: 10px; font-size: 16px; }
    .dim + .dim { margin-left: 5px; }
    .dim.on { background: var(--accent); }
    .results { display: flex; align-items: center; justify-content: space-between; padding: 0 1px 0 8px; }
    .tabs { display: flex; gap: 12px; }
    .tabs button { font-size: 17px; line-height: 24px; color: #333; }
    .tabs button.on { color: #fff; }
    .export { width: 60px; height: 32px; margin-top: 6px; font-size: 13px; }
    .sheet { margin: 0 2px; border: 1px solid var(--line); }
    .status { height: 22px; padding: 0 21px; background: var(--bar); text-align: right; font-size: 15px; line-height: 22px; }
  `];
  private tool(label: string, glyph: unknown, size = "") {
    return html`<button class="tool ${size}">${icon(28, 28, glyph)}${label}</button>`;
  }
  render() {
    return html`
      <header>
        <div class="titlebar">
          ${icon(16, 16, svg`<defs><linearGradient id="lg" x1="0" y1="0" x2="0" y2="1"><stop stop-color="#0b2f58"/><stop offset="1" stop-color="#081a38"/></linearGradient></defs><rect width="16" height="16" rx="2.500" fill="url(#lg)"/><path d="M1 11 4 6.500 6 11 9.500 4 11 11.500 15 3.500" stroke="#1e90ff" stroke-width="2.400" stroke-linejoin="round"/>`)}
          <span class="caption">MegaVision(test) - 静态列表.mpm*</span>
          <div class="wins">
            <button aria-label="最小化">${icon(10, 10, svg`<path d="M0 5.500H10" stroke="#000"/>`)}</button>
            <button aria-label="还原">${icon(10, 10, svg`<rect x=".5" y="2" width="7.500" height="7.500" rx="1.500" stroke="#000"/><path d="M2.500.5H8Q9.500.5 9.500 2V7.500" stroke="#000"/>`)}</button>
            <button aria-label="关闭">${icon(10, 10, svg`<path d="M0 0 10 10M10 0 0 10" stroke="#000"/>`)}</button>
          </div>
        </div>
        <nav class="menu">${["文件", "程序", "流程", "语言", "帮助"].map((m) => html`<button>${m}</button>`)}</nav>
        <div class="toolbar">
          ${this.tool("新建", tools.create)}${this.tool("打开", tools.open)}${this.tool("保存", tools.save)}
          <span class="sep"></span>
          ${this.tool("自动", tools.auto)}${this.tool("单次", tools.once)}
          <span class="sep"></span>
          ${this.tool("流程设置", tools.flow, "four")}${this.tool("通信配置", tools.comm, "four")}${this.tool("数据库配置", tools.db, "five")}
          ${this.tool("运行设计", tools.design, "four")}${this.tool("运行界面", tools.screen, "four")}${this.tool("手眼标定", tools.arm, "four")}
          <span class="sep"></span>
          ${this.tool("关于", tools.about)}
        </div>
      </header>
      <main class="main">
        <flow-panel></flow-panel>
        <section class="work">
          <div class="source">
            <label for="image">图像</label>
            <div class="combo">
              <select id="image"><option>图像</option></select>
              <span class="mark">${icon(14, 14, svg`<rect x=".5" y=".5" width="13" height="13" stroke="#fff"/><rect x="3" y="3" width="8" height="8" fill="#6f4"/>`)}</span>
              <span class="chev">${wide(20, 12, svg`<path d="M1 1 10 10.500 19 1" stroke="#eee" stroke-width="2.400"/>`)}</span>
            </div>
            <button class="btn save">保存</button>
            <span class="pipe">|</span>
            <button class="btn dim">${icon(18, 18, svg`<rect x=".7" y="1.500" width="16.600" height="15" rx="2" stroke="#ddd" stroke-width="1.300"/><circle cx="12.500" cy="5.500" r="1.700" fill="#ddd"/><path d="M1 13 6 8 11.500 14M9.500 12 12 10 17 14.500" stroke="#ddd" stroke-width="1.300"/>`)}2D</button>
            <button class="btn dim on">${icon(18, 18, svg`<path d="M9 .8 16.800 4.800V13.200L9 17.200 1.200 13.200V4.800ZM1.200 4.800 9 9 16.800 4.800M9 9V17" stroke="#fff" stroke-opacity=".85" stroke-width="1.200"/>`)}3D</button>
          </div>
          <image-viewer></image-viewer>
          <div class="results">
            <nav class="tabs">${["结果", "历史", "统计", "模块输出"].map((t, i) => html`<button class=${classMap({ on: this.resultTab === i })} @click=${() => (this.resultTab = i)}>${t}</button>`)}</nav>
            <button class="btn export">保存表</button>
          </div>
          <div class="sheet"></div>
        </section>
      </main>
      <footer class="status">周期时间:1.523毫秒</footer>
    `;
  }
}
